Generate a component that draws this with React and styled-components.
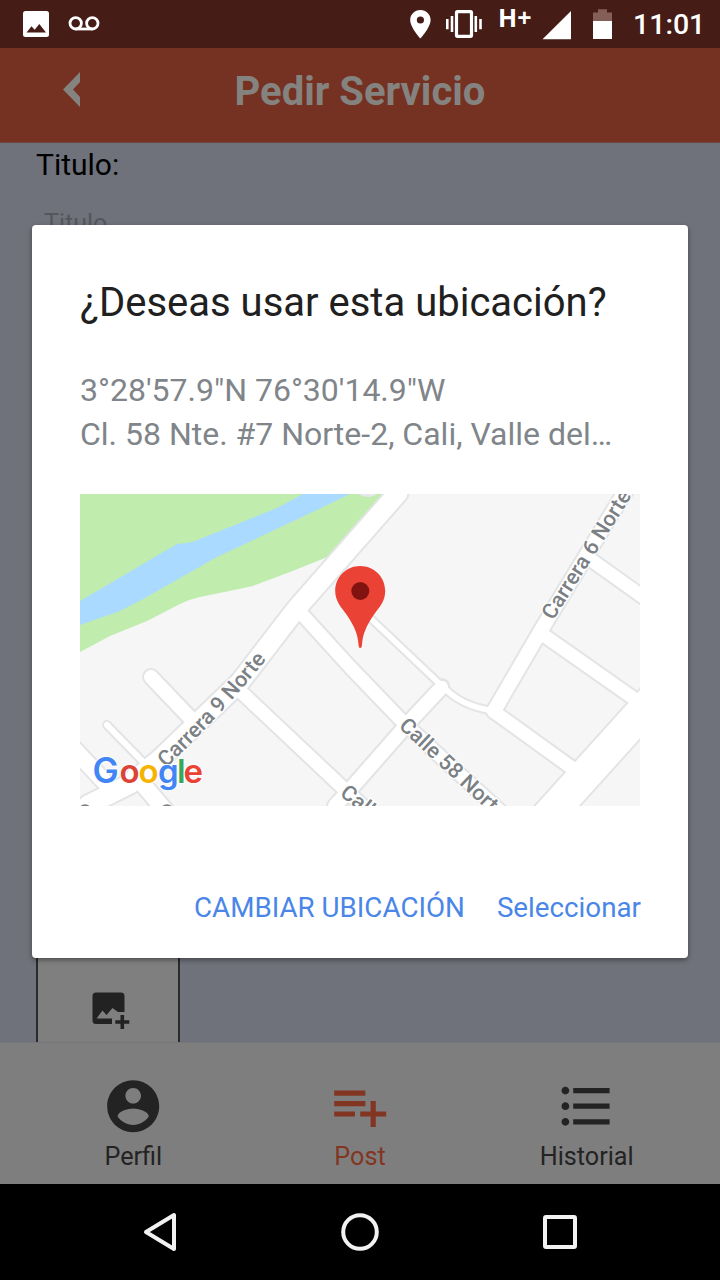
import React from "react";
import styled, { createGlobalStyle } from "styled-components";

const GlobalStyle = createGlobalStyle`
  * { box-sizing: border-box; }
  body { margin: 0; background: #000; font-family: Roboto, "Liberation Sans", sans-serif; }
`;

const Screen = styled.div`
  position: relative;
  display: flex;
  flex-direction: column;
  width: 720px;
  height: 1280px;
  overflow: hidden;
`;

const StatusBar = styled.header`
  display: flex;
  justify-content: space-between;
  height: 48px;
  padding: 0 18px 0 23px;
  background: #451c16;
  color: #fff;
`;

const StatusGroup = styled.div`
  display: flex;
  align-items: flex-start;
  gap: ${(p) => p.$gap}px;
`;

const Network = styled.span`
  width: 33px;
  margin: 0 11px 0 15px;
  font: 700 25px/34px "Open Sans", sans-serif;
  white-space: nowrap;
`;

const Clock = styled.span`
  width: 69px;
  margin-left: 21px;
  font-size: 28.5px;
  font-weight: 500;
  line-height: 50px;
  white-space: nowrap;
`;

const Svg = styled.svg`
  display: block;
  flex: none;
  margin: ${(p) => p.$margin || "0"};
`;

const TitleBar = styled.div`
  display: grid;
  grid-template-columns: 100px 1fr 100px;
  height: 95px;
  background: #753222;
  border-bottom: 1px solid #70483f;
`;

const ScreenTitle = styled.h1`
  margin: 0;
  color: #858380;
  font-size: 40px;
  font-weight: 700;
  line-height: 88px;
  text-align: center;
`;

const Form = styled.main`
  display: flex;
  flex-direction: column;
  height: 899px;
  padding: 0 36px;
  background: #6f727a;
`;

const FieldLabel = styled.label`
  color: #000;
  font-size: 30px;
  line-height: 44px;
`;

const Placeholder = styled.span`
  margin: 22px 0 0 8px;
  color: #55565d;
  font-size: 25px;
  line-height: 30px;
`;

const Upload = styled.div`
  display: flex;
  width: 144px;
  height: 100px;
  margin-top: auto;
  padding: 49px 0 0 54px;
  background: #7f7f7f;
  border: solid #2a2a2a;
  border-width: 0 2px;
`;

const TabBar = styled.nav`
  display: grid;
  grid-template-columns: repeat(3, 1fr);
  height: 142px;
  padding: 32px 20px 0;
  background: #7e7e7e;
  border-top: 1px solid #77777b;
`;

const Tab = styled.div`
  display: flex;
  flex-direction: column;
  align-items: center;
  color: ${(p) => (p.$active ? "#823622" : "#232323")};
  font-size: 25.2px;
  line-height: 39px;
`;

const SystemNav = styled.footer`
  display: flex;
  justify-content: center;
  align-items: center;
  gap: 162px;
  height: 96px;
  background: #000;
`;

const Overlay = styled.div`
  position: absolute;
  top: 225px;
  left: 32px;
  width: 656px;
`;

const Dialog = styled.section`
  display: flex;
  flex-direction: column;
  height: 733px;
  padding: 48px;
  background: #fff;
  border-radius: 4px;
  box-shadow: 0 2px 5px rgba(0, 0, 0, 0.4);
`;

const Question = styled.h2`
  margin: 0;
  color: #202020;
  font-size: 40px;
  font-weight: 400;
  line-height: 60px;
  white-space: nowrap;
`;

const Address = styled.p`
  margin: 35px 0 38px;
  color: #80858a;
  font-size: 32px;
  line-height: 44px;
  white-space: nowrap;
`;

const Actions = styled.div`
  display: flex;
  justify-content: flex-end;
  gap: 32px;
  margin: 80px -1px 0 0;
`;

const TextButton = styled.button`
  padding: 0;
  border: 0;
  background: none;
  color: #4a86e8;
  font-family: inherit;
  font-size: 27.75px;
  line-height: 44px;
  white-space: nowrap;
`;

function Glyph({ box, margin, children }) {
  const [x, y, w, h] = box;
  return (
    <Svg width={w} height={h} viewBox={`${x} ${y} ${w} ${h}`} $margin={margin}>
      {children}
    </Svg>
  );
}

function TabIcon({ d }) {
  return (
    <Svg width="62.4" height="62.4" viewBox="0 0 24 24" fill="currentColor">
      <path d={d} />
    </Svg>
  );
}

const tabs = [
  {
    label: "Perfil",
    d: "M12 2C6.48 2 2 6.48 2 12s4.48 10 10 10 10-4.48 10-10S17.52 2 12 2zm0 3c1.66 0 3 1.34 3 3s-1.34 3-3 3-3-1.34-3-3 1.34-3 3-3zm0 14.2c-2.5 0-4.71-1.28-6-3.22.03-1.99 4-3.08 6-3.08 1.99 0 5.97 1.09 6 3.08-1.29 1.94-3.5 3.22-6 3.22z",
  },
  {
    label: "Post",
    active: true,
    d: "M14 10H2v2h12v-2zm0-4H2v2h12V6zm4 8v-4h-2v4h-4v2h4v4h2v-4h4v-2h-4zM2 16h8v-2H2v2z",
  },
  {
    label: "Historial",
    d: "M4 10.5c-.83 0-1.5.67-1.5 1.5s.67 1.5 1.5 1.5 1.5-.67 1.5-1.5-.67-1.5-1.5-1.5zm0-6c-.83 0-1.5.67-1.5 1.5S3.17 7.5 4 7.5 5.5 6.83 5.5 6 4.83 4.5 4 4.5zm0 12c-.83 0-1.5.68-1.5 1.5s.68 1.5 1.5 1.5 1.5-.68 1.5-1.5-.67-1.5-1.5-1.5zM7 19h14v-2H7v2zm0-6h14v-2H7v2zm0-8v2h14V5H7z",
  },
];

const roads = [
  { d: "M398 493L297 608L240 682L160 759L130 784L88 805", w: 19 },
  { d: "M300 612L350 667L401 720L432 749L512 822", w: 13 },
  { d: "M238 689L343 788L385 826", w: 13 },
  { d: "M441 688L412 719L355 784L335 806", w: 14 },
  { d: "M366 614L442 686", w: 5.5 },
  { d: "M442 685Q459 706 494 711", w: 5.5 },
  { d: "M494 711L540 632L561 597L628 487", w: 14 },
  { d: "M587 557L650 602", w: 13 },
  { d: "M542 634L636 700", w: 13 },
  { d: "M493 711L572 768", w: 13 },
  { d: "M660 692L540 825", w: 32 },
  { d: "M151 677L194 722", w: 14 },
  { d: "M107 725L150 769", w: 6 },
  { d: "M74 749L115 793", w: 16 },
  { d: "M135 775L168 814", w: 16 },
];

const MapLabel = styled.text`
  font-family: Roboto, sans-serif;
  font-size: 21.5px;
  font-weight: 500;
  fill: #7b8084;
  stroke: #fff;
  stroke-width: 3px;
  stroke-opacity: 0.8;
  paint-order: stroke;
`;

const GoogleMark = styled.text`
  font-family: Inter, sans-serif;
  font-weight: 600;
  stroke: #fff;
  stroke-width: 2px;
  paint-order: stroke;
`;

function StreetMap() {
  return (
    <Svg width="560" height="312" viewBox="80 494 560 312">
      <rect x="80" y="494" width="560" height="312" fill="#f6f6f7" />
      <path d="M80 494H390L330 556L290 572L253 586Q225 592 200 597Q190 599 180 604L147 621L110 636L80 652Z" fill="#c0ecae" />
      <path d="M80 601L177 544Q186 544 195 541L277 508L303 494H350L300 518L217 557L145 598L120 611L80 625Z" fill="#aadaff" />
      {roads.map((r) => (
        <path key={r.d} d={r.d} fill="none" stroke="#e3e4e6" strokeWidth={r.w + 4} strokeLinecap="round" strokeLinejoin="round" />
      ))}
      <circle cx="442" cy="686" r="8" fill="#e3e4e6" />
      {roads.map((r) => (
        <path key={r.d} d={r.d} fill="none" stroke="#fff" strokeWidth={r.w} strokeLinecap="round" strokeLinejoin="round" />
      ))}
      <circle cx="442" cy="687" r="6" fill="#fff" />
      <ellipse cx="368" cy="493" rx="9" ry="4" fill="#e4e6e8" />
      <circle cx="85" cy="811" r="5.500" fill="none" stroke="#7b8084" strokeWidth="2.500" />
      <circle cx="167" cy="811" r="5.500" fill="none" stroke="#7b8084" strokeWidth="2.500" />
      <path id="carrera9" d="M166 768Q220 717 270 655" fill="none" />
      <path id="carrera6" d="M553 621L638 486" fill="none" />
      <MapLabel><textPath href="#carrera9">Carrera 9 Norte</textPath></MapLabel>
      <MapLabel><textPath href="#carrera6">Carrera 6 Norte</textPath></MapLabel>
      <MapLabel transform="translate(398 727) rotate(43)">Calle 58 Norte</MapLabel>
      <MapLabel transform="translate(339 795) rotate(38)">Calle 57</MapLabel>
      <GoogleMark y="782.5">
        <tspan x="92.500" fontSize="35" fill="#4285f4">G</tspan>
        <tspan x="119.500" fontSize="33" fill="#db4437">o</tspan>
        <tspan x="138.500" fontSize="33" fill="#f4b400">o</tspan>
        <tspan x="158" fontSize="33" fill="#4285f4">g</tspan>
        <tspan x="177" fontSize="33" fill="#3aa757">l</tspan>
        <tspan x="183.500" fontSize="33" fill="#ea4335">e</tspan>
      </GoogleMark>
      <path d="M360.200 566C346.200 566 335.200 577 335.200 591C335.200 601 341 607 346.500 614.500C355 627 358 635 358.600 645.500Q358.800 648 360.200 648Q361.700 648 361.900 645.500C362.500 635 366 626 374 614.500C380 606.500 385.200 601 385.200 591C385.200 577 374.200 566 360.200 566Z" fill="#ea4335" />
      <circle cx="360.300" cy="591" r="9" fill="#811411" />
    </Svg>
  );
}

export default function App() {
  return (
    <>
      <GlobalStyle />
      <Screen>
        <StatusBar>
          <StatusGroup $gap={19}>
            <Glyph box={[23, 11, 26, 26]} margin="11px 0 0">
              <rect x="23" y="11" width="26" height="26" rx="2.5" fill="#fff" />
              <path d="M26.500 32.500L31.500 26.200L34.700 29.800L39.300 24L46 32.500Z" fill="#451c16" />
            </Glyph>
            <Glyph box={[68, 16, 32, 15]} margin="16px 0 0">
              <g fill="none" stroke="#fff" strokeWidth="2.800">
                <circle cx="75.700" cy="23.300" r="5.700" />
                <circle cx="92.300" cy="23.300" r="5.700" />
                <path d="M75.700 29H92.300" />
              </g>
            </Glyph>
          </StatusGroup>
          <StatusGroup $gap={0}>
            <Glyph box={[410, 10, 21, 29]} margin="10px 0 0">
              <path fillRule="evenodd" d="M420.400 10C414.500 10 410.200 14.500 410.200 20C410.200 27.500 420.400 38.500 420.400 38.500S430.600 27.500 430.600 20C430.600 14.500 426.300 10 420.400 10ZM420.400 16.400A3.600 3.600 0 1 1 420.400 23.600A3.600 3.600 0 1 1 420.400 16.400Z" fill="#fff" />
            </Glyph>
            <Glyph box={[445, 10, 38, 28]} margin="10px 0 0 14px">
              <path d="M447.300 19V29.300M452 16V32M475.800 16V32M480.500 19V29.300" stroke="#fff" strokeWidth="2.600" />
              <rect x="456.500" y="11.700" width="15" height="24.600" rx="1" fill="none" stroke="#fff" strokeWidth="3.200" />
            </Glyph>
            <Network>H+</Network>
            <Glyph box={[542, 10, 29, 30]} margin="10px 0 0">
              <path d="M542.500 39.300L571 11V39.300Z" fill="#fff" />
            </Glyph>
            <Glyph box={[593, 9, 19, 30]} margin="9px 0 0 22px">
              <path d="M593 21V12.500H598V9.300H607V12.500H612V21Z" fill="#845f58" />
              <rect x="593" y="21" width="19" height="18" fill="#fff" />
            </Glyph>
            <Clock>11:01</Clock>
          </StatusGroup>
        </StatusBar>
        <TitleBar>
          <Glyph box={[62, 71, 19, 37]} margin="23px 0 0 62px">
            <path d="M80 72V82L73 89.500L80 97V107L63 89.500Z" fill="#858380" />
          </Glyph>
          <ScreenTitle>Pedir Servicio</ScreenTitle>
        </TitleBar>
        <Form>
          <FieldLabel>Titulo:</FieldLabel>
          <Placeholder>Titulo</Placeholder>
          <Upload>
            <Glyph box={[92, 991, 38, 39]}>
              <path d="M96 992.500H121Q124.500 992.500 124.500 996V1012H118L112.500 1008L106.500 1015L102.500 1010.500L96.500 1018.500H112V1024H96Q92.500 1024 92.500 1020.500V996Q92.500 992.500 96 992.500Z" fill="#222" />
              <path d="M122.300 1015V1029M115.300 1022H129.300" stroke="#222" strokeWidth="3.600" />
            </Glyph>
          </Upload>
        </Form>
        <TabBar>
          {tabs.map((t) => (
            <Tab key={t.label} $active={t.active}>
              <TabIcon d={t.d} />
              {t.label}
            </Tab>
          ))}
        </TabBar>
        <SystemNav>
          <Glyph box={[143, 1212, 34, 40]} margin="0 2px 0 0">
            <path d="M174 1215V1249L146 1232Z" fill="none" stroke="#f2f2f2" strokeWidth="4" strokeLinejoin="round" />
          </Glyph>
          <Glyph box={[341, 1213, 38, 38]}>
            <circle cx="360" cy="1232" r="16.800" fill="none" stroke="#f2f2f2" strokeWidth="4" />
          </Glyph>
          <Glyph box={[543, 1215, 34, 34]} margin="0 0 0 2px">
            <rect x="545" y="1217" width="30" height="30" rx="1" fill="none" stroke="#f2f2f2" strokeWidth="4" />
          </Glyph>
        </SystemNav>
        <Overlay>
          <Dialog>
            <Question>¿Deseas usar esta ubicación?</Question>
            <Address>
              3°28'57.9"N 76°30'14.9"W
              <br />
              Cl. 58 Nte. #7 Norte-2, Cali, Valle del…
            </Address>
            <StreetMap />
            <Actions>
              <TextButton>CAMBIAR UBICACIÓN</TextButton>
              <TextButton>Seleccionar</TextButton>
            </Actions>
          </Dialog>
        </Overlay>
      </Screen>
    </>
  );
}
